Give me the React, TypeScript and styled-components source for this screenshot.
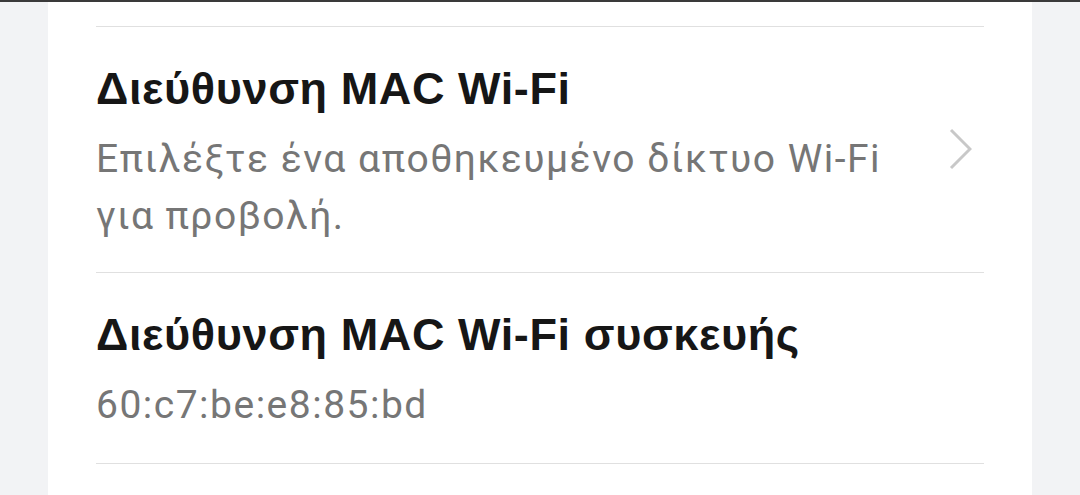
import styled, { createGlobalStyle } from "styled-components";

const GlobalStyle = createGlobalStyle`
  html, body {
    margin: 0;
    padding: 0;
    background: #f2f3f5;
  }
  body {
    width: 1080px;
    height: 495px;
    overflow: hidden;
  }
`;

const Page = styled.div`
  width: 1080px;
  height: 495px;
  border-top: 2px solid #3a3a3a;
  box-sizing: border-box;
  background: #f2f3f5;
  padding: 0 48px;
`;

const Card = styled.div`
  background: #fff;
  height: 100%;
  padding: 0 48px;
  display: flex;
  flex-direction: column;
`;

const Divider = styled.div`
  height: 24px;
  border-bottom: 1px solid #e0e0e0;
`;

const Row = styled.div<{ $bottom: number }>`
  padding: 34px 0 ${(p) => p.$bottom}px;
  border-bottom: 1px solid #e0e0e0;
  display: flex;
  align-items: center;
  gap: 24px;
`;

const RowText = styled.div`
  flex: 1;
  display: flex;
  flex-direction: column;
  gap: 14px;
`;

const Title = styled.div`
  font-family: "Liberation Sans", Arial, sans-serif;
  font-weight: bold;
  font-size: 45px;
  letter-spacing: 0.6px;
  line-height: 56px;
  color: #161616;
`;

const Subtitle = styled.div`
  font-family: Roboto, "Noto Sans", sans-serif;
  font-size: 39px;
  letter-spacing: 1.5px;
  line-height: 57px;
  color: #767676;
`;

const ChevronIcon = styled.svg`
  flex: none;
  margin: 0 12px 8px 0;
`;

const Chevron = () => (
  <ChevronIcon width="24" height="44" viewBox="0 0 24 44" fill="none">
    <path d="M3 3 L22 22 L3 41" stroke="#c8c8c8" strokeWidth="3" />
  </ChevronIcon>
);

export default function App() {
  return (
    <>
      <GlobalStyle />
      <Page>
        <Card>
          <Divider />
          <Row $bottom={27}>
            <RowText>
              <Title>Διεύθυνση MAC Wi-Fi</Title>
              <Subtitle>
                Επιλέξτε ένα αποθηκευμένο δίκτυο Wi-Fi
                <br />
                για προβολή.
              </Subtitle>
            </RowText>
            <Chevron />
          </Row>
          <Row $bottom={29}>
            <RowText>
              <Title>Διεύθυνση MAC Wi-Fi συσκευής</Title>
              <Subtitle>60:c7:be:e8:85:bd</Subtitle>
            </RowText>
          </Row>
        </Card>
      </Page>
    </>
  );
}
